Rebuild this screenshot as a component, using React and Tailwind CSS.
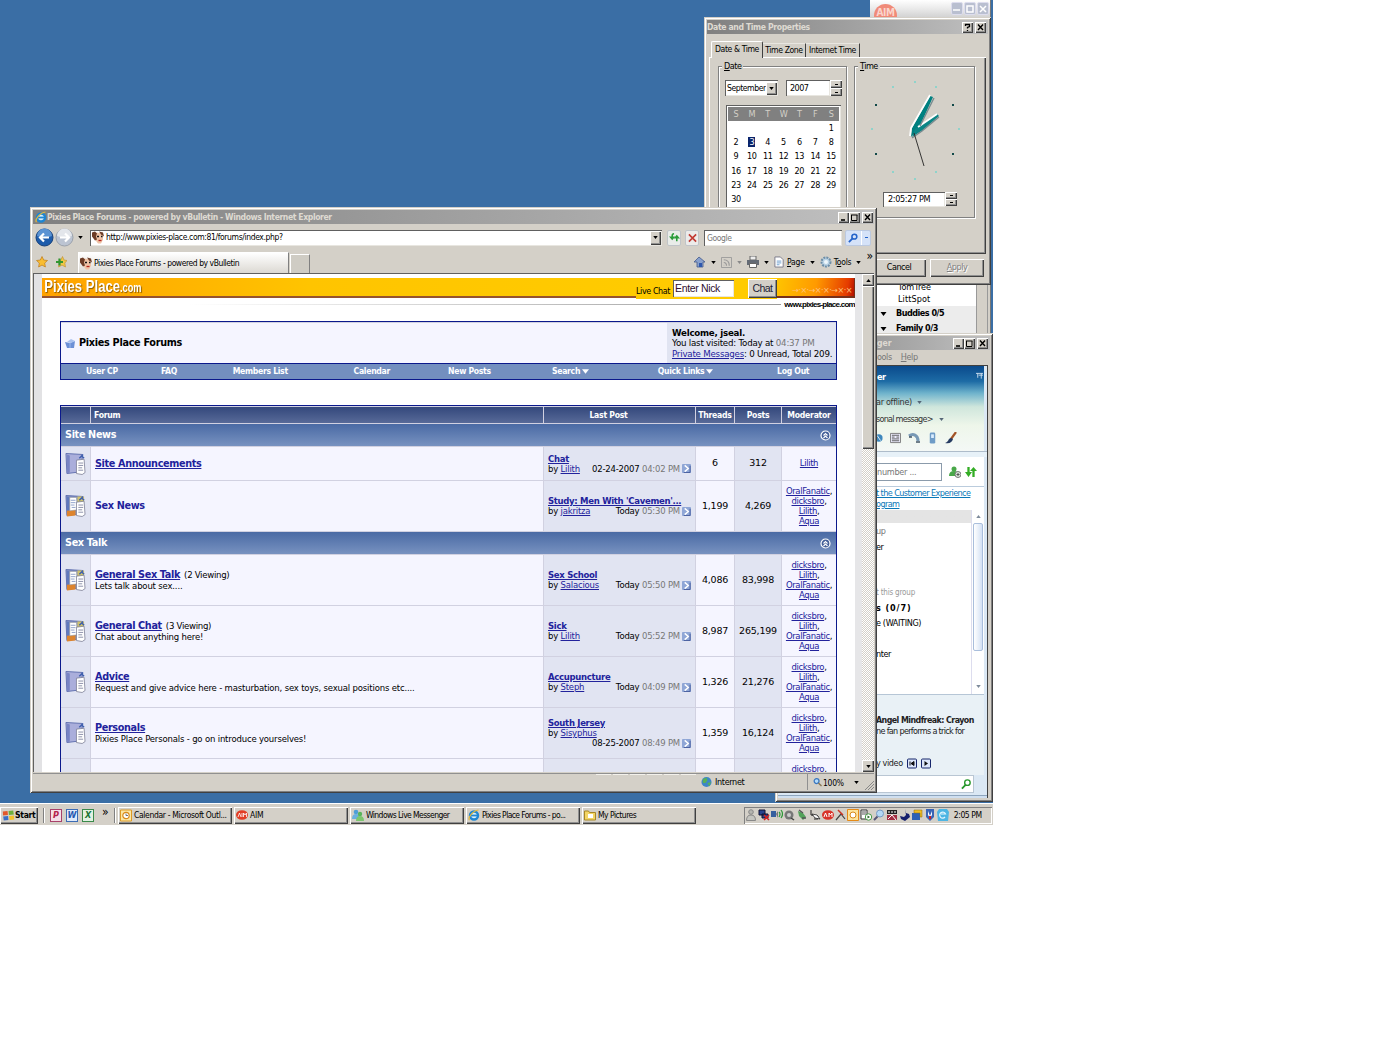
import { clsx } from 'clsx';

const RAISED = 'bg-[#d4d0c8] shadow-[inset_1px_1px_#fff,inset_-1px_-1px_#404040,inset_-2px_-2px_#909090]';
const SUNKEN = 'bg-white shadow-[inset_1px_1px_#606060,inset_-1px_-1px_#e8e6e0]';
const WINDOW = 'absolute bg-[#d4d0c8] shadow-[inset_1px_1px_#d4d0c8,inset_-1px_-1px_#404040,inset_2px_2px_#fff,inset_-2px_-2px_#808080]';

const Caret = ({ className }) => (
    <svg viewBox="0 0 6 4" className={clsx('w-[5px] h-[3px] shrink-0', className)}>
        <path d="M0 0h6L3 4z" fill="currentColor" />
    </svg>
);

const TitleButton = ({ kind }) => (
    <div className={clsx(RAISED, 'w-[11px] h-[11px]')}>
        <svg viewBox="0 0 11 11" className="w-[11px] h-[11px]" fill="none" stroke="#000">
            {kind === 'min' && <path d="M3 8h4" strokeWidth="1.6" />}
            {kind === 'max' && <path d="M2 3h6.5M2.5 3v5.5h5.5V3" />}
            {kind === 'close' && <path d="M3 2.5l5 5.5M8 2.5l-5 5.5" strokeWidth="1.4" />}
            {kind === 'help' && <path d="M3.5 4V2.5h4v2l-2 1v1M5.5 8v1" strokeWidth="1.3" />}
        </svg>
    </div>
);

const Spinner = ({ className }) => (
    <div className={clsx('flex flex-col', className)}>
        <div className={clsx(RAISED, 'flex-1 flex items-center justify-center')}><i className="w-[3px] h-px bg-black" /></div>
        <div className={clsx(RAISED, 'flex-1 flex items-center justify-center')}><i className="w-[3px] h-px bg-black" /></div>
    </div>
);

/* ---------- AIM buddy list ---------- */

const AimWindow = () => (
    <div className="absolute left-[870px] top-0 w-[121px] h-[336px] bg-[#d4d0c8] border-r border-[#777] flex flex-col">
        <div className="h-[18px] flex items-start bg-linear-to-b from-white via-[#e9e9e9] to-[#d0d0d0]">
            <div className="mt-[4px] ml-[4px] w-[23px] h-[14px] rounded-t-full bg-[#f08a78] text-[#fbd5cc] text-[10px] leading-[18px] font-bold text-center tracking-[-0.5px]">AIM</div>
            <div className="ml-auto mr-px mt-[2px] flex gap-px">
                {['min', 'max', 'close'].map((k) => (
                    <div key={k} className="w-[12px] h-[13px] rounded-[2px] bg-[#b9bfd0] border border-[#dde] flex items-center justify-center">
                        <svg viewBox="0 0 8 8" className="w-[8px] h-[8px]" fill="none" stroke="#fff" strokeWidth="1.5">
                            {k === 'min' && <path d="M0 5h7" />}
                            {k === 'max' && <path d="M1 1h6v6H1z" />}
                            {k === 'close' && <path d="M1 1l6 6M7 1L1 7" />}
                        </svg>
                    </div>
                ))}
            </div>
        </div>
        <div className="mt-[264px] flex-1 flex">
            <div className="w-[106px] bg-white text-[9px]">
                <div className="pl-[28px] h-[10px] leading-[10px]">TomTree</div>
                <div className="pl-[28px] h-[14px] leading-[15px] tracking-[0.1px]">LittSpot</div>
                <div className="bg-[#ececec] font-bold tracking-[-0.5px]">
                    <div className="pl-[10px] h-[15px] flex items-center"><Caret className="w-[7px] h-[4px] mr-[9px]" />Buddies 0/5</div>
                    <div className="pl-[10px] h-[15px] flex items-center"><Caret className="w-[7px] h-[4px] mr-[9px]" />Family 0/3</div>
                </div>
            </div>
            <div className="w-[12px] bg-[#d4d0c8] border-x border-[#999]" />
        </div>
    </div>
);

/* ---------- Date and Time ---------- */

const weeks = [
    ['', '', '', '', '', '', '1'],
    ['2', '3', '4', '5', '6', '7', '8'],
    ['9', '10', '11', '12', '13', '14', '15'],
    ['16', '17', '18', '19', '20', '21', '22'],
    ['23', '24', '25', '26', '27', '28', '29'],
    ['30', '', '', '', '', '', ''],
];

const tealTicks = [[59, 15], [80, 20], [103, 62], [80, 105], [59, 112], [37, 105], [16, 62], [37, 20]];
const darkTicks = [[97, 38], [97, 87], [20, 87], [20, 38]];

const Clock = () => (
    <svg viewBox="0 0 119 124" className="-mt-[7px] w-[119px] h-[124px]">
        {tealTicks.map(([x, y]) => <rect key={`${x}-${y}`} x={x} y={y} width="2" height="2" fill="#8fd3cb" />)}
        {darkTicks.map(([x, y]) => <rect key={`${x}-${y}`} x={x} y={y} width="2" height="2" fill="#104848" />)}
        <path d="M56 71l1-9 18-32 3 1-14 31z" fill="#008080" />
        <path d="M57 71l3-8 22-15 2 2-16 14z" fill="#0b8585" />
        <path d="M55 70l1-8L75 29M63 61l19-13" fill="none" stroke="#fff" strokeWidth="1.8" />
        <path d="M57 72l10-7 17-14M65 60l14-28" fill="none" stroke="#7a8c90" strokeWidth="1.4" />
        <path d="M59 67l10 33" stroke="#222" strokeWidth="0.9" />
    </svg>
);

const Group = ({ label, className, children }) => (
    <div className={clsx('border border-[#808080] shadow-[1px_1px_#fff,inset_1px_1px_#fff]', className)}>
        <div className="h-[12px] -mt-[6px] flex"><span className="ml-[3px] px-[2px] bg-[#d4d0c8] leading-[10px] h-[11px] tracking-[-0.5px]"><u>{label[0]}</u>{label.slice(1)}</span></div>
        {children}
    </div>
);

const DateTimeWindow = () => (
    <div className={clsx(WINDOW, 'left-[704px] top-[17px] w-[287px] h-[268px] p-[3px] text-[9px]')}>
        <div className="h-[14px] flex items-center gap-px pr-[2px] bg-linear-to-r from-[#808080] to-[#c0c0c0]">
            <span className="text-[#dedad2] font-bold text-[8.6px] tracking-[-0.37px]">Date and Time Properties</span>
            <div className="ml-auto flex gap-[2px]"><TitleButton kind="help" /><TitleButton kind="close" /></div>
        </div>
        <div className="h-[23px] pl-[4px] flex items-end text-[8.600px] tracking-[-0.4px]">
            <div className="w-[52px] h-[17px] relative top-px bg-[#d4d0c8] border-l border-t border-white border-r border-r-[#404040] rounded-t-[2px] text-center leading-[14px]">Date &amp; Time</div>
            <div className="w-[43px] h-[14px] border-t border-[#e8e6e0] border-r border-r-[#404040] text-center leading-[12px]">Time Zone</div>
            <div className="w-[54px] h-[14px] border-t border-[#e8e6e0] border-r border-r-[#404040] text-center leading-[12px]">Internet Time</div>
        </div>
        <div className="mx-[2px] h-[197px] border-l border-t border-white shadow-[inset_-1px_-1px_#404040,inset_-2px_-2px_#909090] flex gap-[7px] pl-[8px] pt-[8px]">
            <Group label="Date" className="w-[129px] h-[152px]">
                <div className="mt-[7px] ml-[6px] flex">
                    <div className={clsx(SUNKEN, 'w-[53px] h-[16px] flex items-center pl-[2px] pr-px text-[8.600px] tracking-[-0.45px]')}>
                        September
                        <div className={clsx(RAISED, 'ml-auto w-[11px] h-[13px] shrink-0 flex items-center justify-center')}><Caret className="w-[4px]" /></div>
                    </div>
                    <div className={clsx(SUNKEN, 'ml-[8px] w-[44px] h-[16px] leading-[16px] pl-[4px] tracking-[-0.55px]')}>2007</div>
                    <Spinner className="w-[12px] h-[16px]" />
                </div>
                <div className={clsx(SUNKEN, 'mt-[9px] ml-[7px] w-[115px] h-[103px] p-[2px] text-center tracking-[-0.4px]')}>
                    <div className="grid grid-cols-7 h-[14px] leading-[14px] bg-[#808080] text-[#d4d0c8]">
                        {['S', 'M', 'T', 'W', 'T', 'F', 'S'].map((d, i) => <span key={i}>{d}</span>)}
                    </div>
                    {weeks.map((week, i) => (
                        <div key={i} className="grid grid-cols-7 h-[14.2px] leading-[14px]">
                            {week.map((d, j) => (
                                <span key={j}>{d === '3' ? <b className="inline-block w-[7px] h-[10px] leading-[10px] bg-[#0a246a] text-white font-normal">3</b> : d}</span>
                            ))}
                        </div>
                    ))}
                </div>
            </Group>
            <Group label="Time" className="w-[121px] h-[152px]">
                <Clock />
                <div className="mt-[2px] ml-[28px] flex">
                    <div className={clsx(SUNKEN, 'w-[62px] h-[15px] leading-[15px] pl-[5px] tracking-[-0.35px]')}>2:05:27 PM</div>
                    <Spinner className="w-[12px] h-[14px]" />
                </div>
            </Group>
        </div>
        <div className="mt-[5px] mr-[4px] flex justify-end gap-[4px] tracking-[-0.5px]">
            <div className={clsx(RAISED, 'w-[54px] h-[18px] leading-[17px] text-center')}>Cancel</div>
            <div className={clsx(RAISED, 'w-[54px] h-[18px] leading-[17px] text-center text-[#808080] [text-shadow:1px_1px_#fff]')}><u>A</u>pply</div>
        </div>
    </div>
);

/* ---------- Windows Live Messenger ---------- */

const MessengerWindow = () => (
    <div className={clsx(WINDOW, 'left-[775px] top-[333px] w-[218px] h-[469px] p-[3px] text-[9px] tracking-[-0.4px] whitespace-nowrap overflow-hidden')}>
        <div className="h-[14px] pl-[99px] pr-[2px] flex items-center justify-between bg-linear-to-r from-[#808080] to-[#c0c0c0] text-[#dedad2] font-bold text-[8.6px] tracking-normal">
            ger
            <div className="flex"><TitleButton kind="min" /><TitleButton kind="max" /><div className="ml-[2px]"><TitleButton kind="close" /></div></div>
        </div>
        <div className="h-[15px] pl-[99px] flex items-center gap-[9px] text-[#777]"><span>ools</span><span><u>H</u>elp</span></div>
        <div className="h-[433px] mr-[2px] border-t border-r border-[#404040] bg-[#dbe8f4] flex flex-col">
            <div className="h-[85px] mr-[3px] bg-[linear-gradient(#0a4a8c,#1d6ba5_18%,#6fb3cc_32%,#cfe6dc_48%,#eef6ea_70%,#f4f8f6)] flex flex-col">
                <div className="h-[24px] pl-[99px] pr-[1px] flex items-center justify-between text-white font-bold">
                    er
                    <svg viewBox="0 0 8 8" className="w-[7px] h-[8px] mb-[4px]" fill="none" stroke="#d6e6f4"><path d="M0 1h8M2 1v5M6 1v6M3 3h5" /></svg>
                </div>
                <div className="h-[25px] pl-[98px] flex items-center gap-[5px] text-[#333] tracking-[-0.3px]">ar offline) <Caret className="text-[#567]" /></div>
                <div className="h-[9px] pl-[98px] flex items-center gap-[6px] text-[#333] tracking-[-0.75px]">sonal message&gt; <Caret className="text-[#567]" /></div>
                <div className="h-[27px] pl-[95px] flex items-center gap-[7px]">
                    <svg viewBox="0 0 12 12" className="w-[10px] h-[12px]"><circle cx="7" cy="6" r="4.5" fill="#3d87bd" /><path d="M5 3l4 6" stroke="#fff" /></svg>
                    <svg viewBox="0 0 12 12" className="w-[11px] h-[12px]"><path d="M.5 1h11v10H.5z" fill="#eef" stroke="#777" /><path d="M2 3h8M2 5h3m2 0h3M2 7h8M2 9h8" stroke="#555" /></svg>
                    <svg viewBox="0 0 12 12" className="w-[12px] h-[12px]"><path d="M1 4c4-3 9-1 9 5" fill="none" stroke="#7899b5" strokeWidth="3" /><path d="M1 5h3M8 10h4" stroke="#456" strokeWidth="1.5" /></svg>
                    <svg viewBox="0 0 12 12" className="w-[11px] h-[12px]"><rect x="3" y="0" width="6" height="12" rx="1.5" fill="#6f9cc7" /><path d="M4.500 2h3v4h-3z" fill="#d9ecff" /></svg>
                    <svg viewBox="0 0 12 12" className="w-[12px] h-[12px]"><path d="M11 0L6 7" stroke="#a35427" strokeWidth="2.2" /><path d="M6 6C3 6 4 10 0 11c5 1 7-1 8-4z" fill="#263b62" /></svg>
                </div>
            </div>
            <div className="h-[6px] border-t border-[#aebcca] bg-[#e7f1f8]" />
            <div className="mr-[3px] bg-white h-[30px] flex items-center border-b border-[#bcd]">
                <div className="w-[164px] h-[18px] border border-[#8b9bab] pl-[98px] leading-[16px] text-[#777] tracking-[-0.25px]">number ...</div>
                <svg viewBox="0 0 12 12" className="ml-[7px] w-[12px] h-[12px]"><circle cx="5" cy="3" r="2.500" fill="#49a849" /><path d="M0 10q0-5 5-5t4 5z" fill="#4aa74a" /><circle cx="9" cy="8.500" r="3" fill="#dde8dd" stroke="#777" /><path d="M7.500 8.500h3M9 7v3" stroke="#555" /></svg>
                <svg viewBox="0 0 12 12" className="ml-[4px] w-[12px] h-[12px]"><path d="M3.500 1v6M8.500 11V5" stroke="#34ad25" strokeWidth="2.300" /><path d="M0 6h7l-3.500 5zM5 5h7L8.500 1z" fill="#34ad25" /></svg>
            </div>
            <div className="mr-[3px] bg-white h-[23px] pl-[98px] pt-px leading-[11px] text-[#0a78b8] underline tracking-[-0.57px]">t the Customer Experience<br />ogram</div>
            <div className="mr-[3px] h-[185px] bg-white flex border-b border-[#b6c6d6]">
                <div className="flex-1 pl-[98px] bg-linear-to-b from-[#e4e4e4] from-[13px] to-white to-[13px]">
                    <div className="h-[15px]" />
                    <div className="h-[12px] leading-[12px] text-[#777]">up</div>
                    <div className="h-[20px] leading-[20px]">er</div>
                    <div className="mt-[28px] h-[15px] leading-[15px] text-[#999] text-[8px] tracking-[-0.2px]">t this group</div>
                    <div className="h-[15px] leading-[17px] font-bold tracking-[0.9px]">s (0/7)</div>
                    <div className="h-[15px] leading-[17px] tracking-[-0.35px]">e (WAITING)</div>
                    <div className="mt-[16px] h-[16px] leading-[17px]">nter</div>
                </div>
                <div className="w-[13px] border-l border-[#dde] flex flex-col items-center text-[#7d8a9a]">
                    <Caret className="rotate-180 mt-[5px]" />
                    <div className="mt-[5px] w-[10px] h-[128px] rounded-[2px] border border-[#a9bedc] bg-linear-to-r from-white to-[#d4e1f4]" />
                    <Caret className="mt-auto mb-[6px]" />
                </div>
            </div>
            <div className="h-[80px] bg-[#e9f1f6] mr-[3px] pl-[98px] text-[#222]">
                <div className="pt-[20px] leading-[11px] font-bold text-[8.800px] tracking-[-0.55px]">Angel Mindfreak: Crayon</div>
                <div className="leading-[10px] tracking-[-0.68px]">ne fan performs a trick for</div>
                <div className="mt-[21px] flex items-center gap-[4px]">y video
                    <svg viewBox="0 0 10 10" className="w-[10px] h-[11px]"><rect x=".5" y=".5" width="9" height="9" rx="1" fill="#dce6fa" stroke="#17266b" /><path d="M3 3v4M7 3v4L4 5z" fill="#111" stroke="#111" /></svg>
                    <svg viewBox="0 0 10 10" className="w-[10px] h-[11px]"><rect x=".5" y=".5" width="9" height="9" rx="1" fill="#dce6fa" stroke="#17266b" /><path d="M3.500 2.500v5L7 5z" fill="#111" /></svg>
                </div>
            </div>
            <div className="w-[196px] h-[18px] bg-white border border-[#b9c6d3] flex items-center justify-end pr-px">
                <svg viewBox="0 0 12 12" className="w-[11px] h-[12px]" fill="none" stroke="#27972b"><circle cx="7" cy="4.500" r="3" strokeWidth="1.500" /><path d="M5 7l-4 4" strokeWidth="2" /></svg>
            </div>
            <div className="flex-1 mt-[2px] border-t border-[#8ea5bd] bg-[#cfdff0]" />
        </div>
    </div>
);

/* ---------- Forum page ---------- */

const Link = ({ children, plain, className }) => <span className={clsx('text-[#22229c]', !plain && 'underline', className)}>{children}</span>;

const FolderIcon = ({ fresh }) => (
    <svg viewBox="0 0 22 24" className="w-[21px] h-[24px]">
        <path d="M1 1l17 1v18L2 22z" fill={fresh ? '#7f8fc4' : '#aaaedb'} stroke="#5f6fae" />
        <path d="M2 2l3 1v18l-3 1z" fill={fresh ? '#5f79bd' : '#7884c4'} />
        {fresh && <path d="M2 17l9-1v6l-9 1z" fill="#dd842d" />}
        {fresh && <path d="M5 3h7l1 13-8 1z" fill="#fff" stroke="#999" strokeWidth=".6" />}
        {fresh && <path d="M13 2h7v6h-7z" fill="#cfc26d" />}
        <path d="M12 8l8-1 1 14-3 2-6-1z" fill="#fff" stroke="#777a90" strokeWidth=".8" />
        <path d="M14 11h5M14 13.500h5M14 16h4M14 18.500h5" stroke="#8b8fa8" />
        {fresh && <path d="M6 6h5M6 8.500h5M6 11h4M7 13.500h4" stroke="#8ea0c8" />}
        <path d="M15 6l4-4M17 3l3 3" stroke="#3e5fae" strokeWidth="1.500" />
    </svg>
);

const GoIcon = () => (
    <svg viewBox="0 0 10 10" className="w-[9px] h-[9px] shrink-0 ml-[2px]">
        <rect width="10" height="10" rx="1" fill="#8fa6d6" />
        <path d="M3 1.500l4 3.500-4 3.500" fill="none" stroke="#fff" strokeWidth="1.600" /><path d="M9 2v7.500H2" fill="none" stroke="#42589a" />
    </svg>
);

const sections = [
    {
        name: 'Site News',
        forums: [
            { name: 'Site Announcements', last: 'Chat', by: 'Lilith', date: '02-24-2007', time: '04:02 PM', threads: '6', posts: '312', mods: ['Lilith'] },
            { name: 'Sex News', plain: true, fresh: true, last: "Study: Men With 'Cavemen'...", by: 'jakritza', date: 'Today', time: '05:30 PM', threads: '1,199', posts: '4,269', mods: ['OralFanatic', 'dicksbro', 'Lilith', 'Aqua'] },
        ],
    },
    {
        name: 'Sex Talk',
        forums: [
            { name: 'General Sex Talk', viewing: '(2 Viewing)', text: 'Lets talk about sex....', fresh: true, last: 'Sex School', by: 'Salacious', date: 'Today', time: '05:50 PM', threads: '4,086', posts: '83,998' },
            { name: 'General Chat', viewing: '(3 Viewing)', text: 'Chat about anything here!', fresh: true, last: 'Sick', by: 'Lilith', date: 'Today', time: '05:52 PM', threads: '8,987', posts: '265,199' },
            { name: 'Advice', text: 'Request and give advice here - masturbation, sex toys, sexual positions etc....', last: 'Accupuncture', by: 'Steph', date: 'Today', time: '04:09 PM', threads: '1,326', posts: '21,276' },
            { name: 'Personals', text: 'Pixies Place Personals - go on introduce yourselves!', last: 'South Jersey', by: 'Sisyphus', date: '08-25-2007', time: '08:49 PM', wrap: true, threads: '1,359', posts: '16,124' },
        ],
    },
];
const defaultMods = ['dicksbro', 'Lilith', 'OralFanatic', 'Aqua'];

const COLS = 'grid grid-cols-[29px_452px_151px_38px_46px_54px] gap-x-px';

const ForumRow = ({ forum }) => {
    const mods = forum.mods || defaultMods;
    return (
        <div className={clsx(COLS, 'mt-px', mods.length === 1 ? 'h-[33px]' : 'h-[50px]')}>
            <div className="bg-[#e1e4f2] flex items-center justify-center"><FolderIcon fresh={forum.fresh} /></div>
            <div className="bg-[#f5f5ff] flex flex-col justify-center pl-[4px]">
                <div className="leading-[12px] text-[8.600px]">
                    <Link plain={forum.plain} className="font-bold text-[9.700px] tracking-[-0.36px]">{forum.name}</Link>
                    {forum.viewing && <span className="ml-[4px] tracking-[-0.3px]">{forum.viewing}</span>}
                </div>
                {forum.text && <div className="leading-[10px] text-[8.500px] tracking-[-0.17px]">{forum.text}</div>}
            </div>
            <div className="bg-[#e1e4f2] flex flex-col justify-center px-[4px] leading-[10px] text-[8.500px] tracking-[-0.2px]">
                {forum.last && <Link className="font-bold tracking-[-0.3px]">{forum.last}</Link>}
                {forum.by && (
                    <div className={clsx('flex', forum.wrap && 'flex-wrap')}>
                        <span className={clsx(forum.wrap && 'w-full')}>by <Link>{forum.by}</Link></span>
                        <span className="ml-auto flex items-center">{forum.date}&nbsp;<span className="text-[#777]">{forum.time}</span><GoIcon /></span>
                    </div>
                )}
            </div>
            <div className="bg-[#f5f5ff] flex items-center justify-center text-[9.500px] tracking-[-0.2px]">{forum.threads}</div>
            <div className="bg-[#e1e4f2] flex items-center justify-center text-[9.500px] tracking-[-0.2px]">{forum.posts}</div>
            <div className="bg-[#f5f5ff] flex flex-col items-center justify-center leading-[10.200px] text-[8.500px] tracking-[-0.38px]">
                {mods.map((m, i) => <span key={m}><Link>{m}</Link>{i < mods.length - 1 && ','}</span>)}
            </div>
        </div>
    );
};

const navItems = [
    ['User CP', 'w-[82px]'], ['FAQ', 'w-[53px]'], ['Members List', 'w-[130px]'], ['Calendar', 'w-[94px]'],
    ['New Posts', 'w-[102px]'], ['Search', 'w-[101px]', true], ['Quick Links', 'w-[130px]', true], ['Log Out', 'w-[86px]'],
];

const columns = [
    ['', ''], ['Forum', 'text-left pl-[3px]'], ['Last Post', 'pr-[22px]'], ['Threads', ''], ['Posts', ''], ['Moderator', ''],
];

const ForumPage = () => (
    <div className="w-[813px] bg-white font-['DejaVu_Sans',sans-serif] text-black overflow-hidden">
        <div className="h-[22px] mt-[4px] flex items-start">
            <div className="w-[594px] h-[20px] bg-[linear-gradient(90deg,#ffa200,#ffc400_45%,#ffcb00)] border-b-2 border-[#97532d] text-white font-bold font-['Liberation_Sans',sans-serif] [text-shadow:1px_1px_1px_#8a5a00]">
                <div className="flex items-baseline origin-left scale-x-[0.77] pl-[3px]">
                    <span className="text-[17px] leading-[18px]">Pixies Place</span>
                    <span className="text-[12px] leading-[18px]">.com</span>
                </div>
            </div>
            <div className="w-[141px] h-[21px] bg-[#ffcb00] flex items-center font-['Liberation_Sans',sans-serif]">
                <span className="w-[37px] pt-[6px] text-[8px] font-['DejaVu_Sans',sans-serif] tracking-[-0.4px]">Live Chat</span>
                <div className={clsx(SUNKEN, 'w-[61px] h-[17px] leading-[17px] pl-[2px] text-[10.500px] tracking-[-0.35px] text-[#301030]')}>Enter Nick</div>
                <div className={clsx(RAISED, 'ml-[14px] w-[29px] h-[19px] leading-[18px] text-center text-[10.500px] tracking-[-0.6px] text-[#223]')}>Chat</div>
            </div>
            <div className="flex-1 h-[20px] bg-[linear-gradient(100deg,#ffc400,#ff9a00_50%,#e53b00_90%,#b01000)] border-b-2 border-r border-[#77301a] text-[#ffc27c] text-[8px] leading-[26px] text-right pr-[2px] tracking-[-0.5px]">→·×·→×·×·→×·×</div>
        </div>
        <div className="h-[9px] flex items-center">
            <div className="w-[739px] h-px bg-linear-to-r from-white from-20% to-[#999]" />
            <span className="ml-auto font-['Liberation_Sans',sans-serif] font-bold text-[8px] leading-[9px] tracking-[-0.72px]">www.pixies-place.com</span>
        </div>
        <div className="mt-[12px] mx-[18px] w-[777px] border border-[#0b198c] bg-[#0b198c]">
            <div className="h-[41px] flex bg-[#f5f5ff] border-t border-[#d1d1e1]">
                <div className="w-[606px] flex items-center pl-[4px]">
                    <svg viewBox="0 0 11 11" className="w-[11px] h-[11px]"><path d="M0 4l5 1 5-2-1 7H2z" fill="#6c90d6" /><path d="M2 4l4-3 4 2-4 2z" fill="#a9c1ee" /><path d="M5 5v5" stroke="#9bb8ec" /></svg>
                    <b className="ml-[3px] text-[9.700px] tracking-[-0.3px]">Pixies Place Forums</b>
                </div>
                <div className="flex-1 bg-[#e1e4f2] pl-[5px] pt-[5px] leading-[10.300px] text-[8.700px] tracking-[-0.23px]">
                    <b className="tracking-[-0.25px]">Welcome, jseal.</b>
                    <div>You last visited: Today at <span className="text-[#777]">04:37 PM</span></div>
                    <div><Link>Private Messages</Link>: 0 Unread, Total 209.</div>
                </div>
            </div>
            <div className="mt-px h-[15px] flex bg-[#738fbf] text-white font-bold font-['DejaVu_Sans_Condensed',sans-serif] text-[8.600px] tracking-[-0.3px]">
                {navItems.map(([label, width, menu]) => (
                    <div key={label} className={clsx(width, 'flex items-center justify-center gap-[2px]')}>{label}{menu && <Caret className="w-[7px] h-[5px]" />}</div>
                ))}
            </div>
        </div>
        <div className="mt-[25px] mx-[18px] w-[777px] border border-[#0b198c] bg-[#d1d1e1]">
            <div className={clsx(COLS, 'mt-px h-[16px] text-white font-bold font-["DejaVu_Sans_Condensed",sans-serif] text-[8.600px] leading-[17px] text-center tracking-[-0.25px]')}>
                {columns.map(([label, className]) => (
                    <div key={label} className={clsx('bg-linear-to-b from-[#34487c] to-[#586a98] h-[16px]', className)}>{label}</div>
                ))}
            </div>
            {sections.map((s) => (
                <div key={s.name}>
                    <div className="mt-px h-[22px] flex items-center justify-between px-[5px] pl-[4px] bg-linear-to-b from-[#4a6aa4] to-[#7892c0] text-white font-bold text-[9.700px] tracking-[-0.35px]">
                        {s.name}
                        <svg viewBox="0 0 11 11" className="w-[11px] h-[11px]" fill="none" stroke="#fff" strokeWidth="1.2"><circle cx="5.500" cy="5.500" r="4.500" fill="#445f98" /><path d="M3.500 5.500l2-2 2 2M3.500 8l2-2 2 2" /></svg>
                    </div>
                    {s.forums.map((f) => <ForumRow key={f.name} forum={f} />)}
                </div>
            ))}
            <ForumRow forum={{}} />
        </div>
    </div>
);

/* ---------- Internet Explorer ---------- */

const IeIcon = () => (
    <svg viewBox="0 0 12 12" className="w-[12px] h-[12px] shrink-0">
        <circle cx="6" cy="6.500" r="4" fill="#d8effc" stroke="#1f86d2" strokeWidth="2.400" /><path d="M3 6.500h7.500" stroke="#1f86d2" strokeWidth="1.800" />
        <path d="M1.500 11C-.5 9 5 1.500 10.500 1" fill="none" stroke="#e3b93c" strokeWidth="1.200" />
    </svg>
);

const PixieIcon = () => (
    <svg viewBox="0 0 12 12" className="w-[12px] h-[13px] shrink-0">
        <path d="M2 2l3-1 5 1 1 3v3l-2 4H6L3 8z" fill="#efc3a6" /><path d="M0 1l3-1 2 2-1 3 1 3-2 1-3-4zM7 0l4 1 1 4-3-2z" fill="#6d3c26" />
        <path d="M5 5h2M9 5h1.500" stroke="#111" strokeWidth="1.700" /><path d="M6.500 9h3" stroke="#b3261f" strokeWidth="1.300" />
    </svg>
);

const RoundArrow = ({ active }) => (
    <svg viewBox="0 0 19 19" className="w-[19px] h-[19px]">
        <circle cx="9.500" cy="9.500" r="8.500" fill={active ? '#1e5cab' : '#bcc4d2'} stroke={active ? '#153e78' : '#9ba1ac'} />
        <path d="M2 8a7.500 7.500 0 0115 0q-7 3-15 0z" fill={active ? '#5b93d3' : '#e3e6eb'} />
        <path d={active ? 'M14 9.500H5.500M9 5.500l-4 4 4 4' : 'M5 9.500h8.500M10 5.500l4 4-4 4'} fill="none" stroke="#fff" strokeWidth="2.200" />
    </svg>
);

const IeWindow = () => (
    <div className={clsx(WINDOW, 'left-[30px] top-[207px] w-[847px] h-[586px] p-[3px] flex flex-col text-[8.500px] whitespace-nowrap')}>
        <div className="h-[14px] shrink-0 flex items-center pl-[2px] pr-px bg-linear-to-r from-[#808080] to-[#c0c0c0]">
            <IeIcon />
            <span className="text-[#dedad2] font-bold text-[8.600px] tracking-[-0.41px]">Pixies Place Forums - powered by vBulletin - Windows Internet Explorer</span>
            <div className="ml-auto flex"><TitleButton kind="min" /><TitleButton kind="max" /><div className="ml-[2px]"><TitleButton kind="close" /></div></div>
        </div>
        <div className="h-[27px] shrink-0 flex items-center pl-[2px]">
            <RoundArrow active />
            <div className="ml-px"><RoundArrow /></div>
            <Caret className="ml-[4px]" />
            <div className={clsx(SUNKEN, 'ml-[7px] w-[572px] h-[16px] flex items-center gap-[2px] pl-[2px] pr-px tracking-[-0.37px]')}>
                <PixieIcon />http://www.pixies-place.com:81/forums/index.php?
                <div className={clsx(RAISED, 'ml-auto w-[11px] h-[14px] flex items-center justify-center')}><Caret className="w-[4px]" /></div>
            </div>
            <div className="ml-[5px] w-[14px] h-[16px] bg-[#e9ece9] border border-[#c0c4c8] rounded-[2px] flex items-center justify-center">
                <svg viewBox="0 0 12 12" className="w-[11px] h-[11px]"><path d="M5.500 2Q3.500 2 3.500 4v2M8.500 10V6" fill="none" stroke="#2a9c3a" strokeWidth="1.700" /><path d="M0 5h7L3.500 9zM5 7h7L8.500 3z" fill="#2a9c3a" /></svg>
            </div>
            <div className="ml-[4px] w-[14px] h-[16px] bg-[#ecebea] border border-[#c0c4c8] rounded-[2px] flex items-center justify-center">
                <svg viewBox="0 0 10 10" className="w-[9px] h-[10px]" stroke="#c23a34" strokeWidth="1.800"><path d="M1 1l8 8M9 1L1 9" /></svg>
            </div>
            <div className={clsx(SUNKEN, 'ml-[5px] w-[138px] h-[16px] leading-[17px] pl-[3px] text-[#777] tracking-[-0.4px]')}>Google</div>
            <div className="ml-[3px] w-[26px] h-[16px] bg-[#d5e2f8] border border-[#bcc9df] rounded-[2px] flex items-center justify-around">
                <svg viewBox="0 0 11 11" className="w-[10px] h-[10px]" fill="none" stroke="#2463c9"><circle cx="7" cy="4" r="2.700" strokeWidth="1.700" /><path d="M5 6l-4 4" strokeWidth="2" /></svg>
                <i className="w-px h-full bg-white" /><i className="w-[3px] h-px bg-[#2463c9]" />
            </div>
        </div>
        <div className="h-[22px] shrink-0 flex items-center pl-[3px]">
            <svg viewBox="0 0 12 12" className="w-[12px] h-[12px]"><path d="M6 .5l1.700 3.500 3.800.5-2.800 2.600.7 3.900L6 9.100 2.600 11l.7-3.900L.5 4.500 4.300 4z" fill="#f9bd31" stroke="#bf7b18" strokeWidth=".7" /></svg>
            <svg viewBox="0 0 12 12" className="ml-[7px] w-[12px] h-[12px]"><path d="M7.500 .5l1.500 3.500 3 .5-2.200 2.600.7 3.900L7 9.100 3.600 11l.7-3.900z" fill="#f0c846" stroke="#bf8b28" strokeWidth=".6" /><path d="M4.500 2.500v7M1 6h7" stroke="#329631" strokeWidth="2.200" /></svg>
            <div className="ml-[11px] self-end w-[211px] h-[21px] border border-white border-r-[#808080] border-b-0 bg-linear-to-b from-white to-[#dcd9d3] flex items-center gap-[2px] pl-px tracking-[-0.44px]"><PixieIcon />Pixies Place Forums - powered by vBulletin</div>
            <div className="ml-px self-end w-[20px] h-[19px] border border-white border-r-[#808080] border-b-0 bg-[#cfccc4]" />
            <div className="ml-auto flex items-center gap-[5px] pr-px">
                <svg viewBox="0 0 12 12" className="w-[12px] h-[12px]"><path d="M0 6l5-5 6 5H9v5H3V6z" fill="#88a0cc" stroke="#42598c" strokeWidth=".8" /><path d="M5 7h3v4H5z" fill="#2f58ad" /></svg>
                <Caret className="w-[4px]" />
                <svg viewBox="0 0 12 12" className="w-[11px] h-[11px]" fill="none" stroke="#999"><path d="M.5.500h11v11H.5z" /><path d="M3 9h.5M3 6q3 0 3 3.500M3 3q6 0 6 6.500" strokeWidth="1.300" /></svg>
                <Caret className="w-[4px] text-[#888]" />
                <svg viewBox="0 0 12 12" className="w-[12px] h-[12px]"><path d="M3 0h6v4H3z" fill="#eee" stroke="#666" /><path d="M0 4h12v5H0z" fill="#646b75" /><path d="M2.500 7.500h7v4h-7z" fill="#fff" stroke="#666" /></svg>
                <Caret className="w-[4px]" />
                <svg viewBox="0 0 12 12" className="w-[11px] h-[12px]"><path d="M1 .5h6l3 3v8H1z" fill="#fff" stroke="#778" /><path d="M3 5h5M3 7h5M3 9h3" stroke="#69c" /></svg>
                <span className="-ml-[3px] tracking-[-0.2px]"><u>P</u>age</span>
                <Caret className="w-[4px]" />
                <svg viewBox="0 0 12 12" className="w-[12px] h-[12px]"><circle cx="6" cy="6" r="4.500" fill="#b9d2e4" stroke="#6d8ea8" strokeWidth="2" strokeDasharray="2 1" /><circle cx="6" cy="6" r="2" fill="#eef6fb" /></svg>
                <span className="-ml-[3px] tracking-[-0.2px]">T<u>o</u>ols</span>
                <Caret className="w-[4px]" />
                <span className="text-[12px] leading-[8px] -mt-[12px]">»</span>
            </div>
        </div>
        <div className="h-[499px] shrink-0 flex border-l border-t border-[#606060] overflow-hidden">
            <div className="w-[8px] bg-[#e2e2e4]" />
            <ForumPage />
            <div className="w-[7px] bg-[#e6e6e8]" />
            <div className="w-[12px] flex flex-col justify-between bg-[repeating-conic-gradient(#d4d0c8_0_25%,#fff_0_50%)] bg-[length:2px_2px]">
                <div>
                    <div className={clsx(RAISED, 'h-[12px] flex items-center justify-center')}><Caret className="rotate-180" /></div>
                    <div className={clsx(RAISED, 'h-[163px]')} />
                </div>
                <div className={clsx(RAISED, 'h-[12px] flex items-center justify-center')}><Caret /></div>
            </div>
        </div>
        <div className="flex-1 mt-px flex items-center border-t border-[#909090]">
            <div className="ml-[563px] flex gap-[2px] self-start">{[0, 1, 2, 3, 4, 5].map((i) => <i key={i} className="w-[15px] h-px bg-[#f3f1ec]" />)}</div>
            <svg viewBox="0 0 12 12" className="ml-[5px] w-[11px] h-[12px]"><circle cx="6" cy="6" r="5.500" fill="#3c86c9" /><path d="M2 3l4-2 1 3-2 3-3 0zM7 7l4-1-2 5z" fill="#58b158" /></svg>
            <span className="ml-[3px] mt-[2px] text-[9px] tracking-[-0.35px]">Internet</span>
            <div className="ml-auto h-full border-l border-[#909090] flex items-center">
                <svg viewBox="0 0 10 10" className="ml-[5px] w-[9px] h-[10px]" fill="none" stroke="#3976c0"><circle cx="4" cy="4" r="2.700" fill="#b5dcfa" strokeWidth="1.400" /><path d="M6 6l3.500 3.500" stroke="#875" strokeWidth="1.600" /></svg>
                <span className="w-[31px] ml-px mt-[2px] tracking-[-0.3px]">100%</span>
                <Caret className="w-[4px] mr-[5px]" />
                <svg viewBox="0 0 10 10" className="w-[10px] h-[10px] self-end" stroke="#888"><path d="M1 10l9-9M4 10l6-6M7 10l3-3" /></svg>
            </div>
        </div>
    </div>
);

/* ---------- Taskbar ---------- */

const OfficeIcon = ({ letter, className }) => (
    <div className={clsx('w-[12px] h-[13px] border text-[9px] leading-[11px] font-bold italic text-center', className)}>{letter}</div>
);

const OutlookIcon = () => (
    <svg viewBox="0 0 12 12" className="w-[12px] h-[13px] shrink-0"><path d="M.5.500h11v11H.5z" fill="#fce7a3" stroke="#dd9a24" /><circle cx="6" cy="6" r="3.200" fill="#fff" stroke="#d98a1b" strokeWidth="1.200" /><path d="M6 4v2h2" fill="none" stroke="#555" strokeWidth=".8" /></svg>
);

const AimIcon = () => (
    <svg viewBox="0 0 12 12" className="w-[12px] h-[12px] shrink-0"><ellipse cx="6" cy="6" rx="6" ry="4.800" fill="#e23d25" /><path d="M2 8l1.500-4L5 8M6 4v4M7.500 8V4L9 6l1.500-2v4" fill="none" stroke="#fff" strokeWidth=".8" /></svg>
);

const BuddyIcon = () => (
    <svg viewBox="0 0 12 12" className="w-[12px] h-[12px] shrink-0"><circle cx="4" cy="3" r="2.300" fill="#4e9ed8" /><path d="M0 10q0-5 4-5t4 5z" fill="#6ab0e0" /><circle cx="8" cy="5" r="2.200" fill="#58b55a" /><path d="M4 12q0-5 4-5t4 5z" fill="#7cc66f" /></svg>
);

const FolderSmall = () => (
    <svg viewBox="0 0 12 12" className="w-[12px] h-[12px] shrink-0"><path d="M.5 2h4l1 1.500h6V11H.5z" fill="#f3d565" stroke="#a88726" /><path d="M4 5h5v4H4z" fill="#fff" /></svg>
);

const tasks = [
    ['Calendar - Microsoft Outl...', <OutlookIcon />, 'tracking-[-0.35px]'],
    ['AIM', <AimIcon />, 'tracking-[-0.2px]'],
    ['Windows Live Messenger', <BuddyIcon />, 'tracking-[-0.58px]'],
    ['Pixies Place Forums - po...', <IeIcon />, 'tracking-[-0.6px]'],
    ['My Pictures', <FolderSmall />, 'tracking-[-0.5px]'],
];

const tray = [
    <g><circle cx="6" cy="3" r="2.300" fill="#b5b5b0" stroke="#888" /><path d="M1.500 11.500q0-5.500 4.500-5.500t4.500 5.500z" fill="#c4c4bf" stroke="#888" /></g>,
    <g><path d="M1 1h6v5H1zM4 5h6v4H4z" fill="#27448f" stroke="#113" /><path d="M6 6l5 5M11 6l-5 5" stroke="#d32222" strokeWidth="1.600" /></g>,
    <g><path d="M0 2h5v6H0z" fill="#365f9f" /><path d="M5 5l2-3v7z" fill="#777" /><path d="M8 3q2 2 0 5M10 1q3 4 0 8" fill="none" stroke="#2b9936" strokeWidth="1.200" /></g>,
    <g><circle cx="6" cy="6" r="4.500" fill="#777" /><circle cx="6" cy="6" r="2" fill="#ccc" /><path d="M8 9l3 2" stroke="#444" strokeWidth="1.500" /></g>,
    <g><path d="M2 2l5 2 3 4-3 3-4-4z" fill="#53a35a" /><path d="M3 1l4 3M6 9h4" stroke="#555" strokeWidth="1.400" /></g>,
    <g><path d="M2 1v5l7 1v3H5" fill="none" stroke="#222" /><path d="M3 5l5 1 3 4-5-1z" fill="#fff" stroke="#222" strokeWidth=".8" /></g>,
    <g><ellipse cx="6" cy="6" rx="6" ry="4.800" fill="#d83228" /><path d="M2 8l1.500-4L5 8M7 8V4l1.500 2L10 4v4" fill="none" stroke="#fff" /></g>,
    <g><path d="M1 11l5-6 4 5" fill="none" stroke="#444" strokeWidth="1.200" /><path d="M3 1l5 5" stroke="#c32" strokeWidth="1.500" /></g>,
    <g><path d="M.5.500h11v11H.5z" fill="#fce39b" stroke="#e58a17" /><circle cx="6" cy="6" r="3" fill="#fff" stroke="#d98a1b" /></g>,
    <g><path d="M1 1h6v9H1z" fill="#fff" stroke="#333" /><path d="M2 3h4M2 5h4" stroke="#555" /><circle cx="8.500" cy="8" r="3.200" fill="#fff" stroke="#494" /><path d="M7.500 6.500v3L10 8z" fill="#262" /></g>,
    <g><circle cx="7" cy="4.500" r="3.500" fill="#b4d8f5" stroke="#779bc5" /><path d="M4.500 7.500L1 11" stroke="#557" strokeWidth="2" /></g>,
    <g><path d="M1 1h10v4H1z" fill="#222" /><path d="M3 2v2M6 2v2M9 2v2" stroke="#fff" /><path d="M1 6h10v5H1z" fill="#a32d41" /><path d="M2 10l4-4 4 5" fill="none" stroke="#fff" /></g>,
    <g><path d="M6 0l1 4 3 1 1 3-5 4-4-2-1-3 4 1 2-2z" fill="#16206d" /></g>,
    <g><path d="M1 4h8v7H1z" fill="#2b61b6" /><path d="M3 1h8v7H9V4H3z" fill="#edbd24" stroke="#8a6a10" strokeWidth=".5" /></g>,
    <g><path d="M2 0h8v8l-4 4-4-4z" fill="#3964b5" /><path d="M4 2l2 5 2-5v4l-2 3-2-3z" fill="#fff" /><path d="M5 7h2v3H5z" fill="#c22" /></g>,
    <g><path d="M2 0h8l2 3-1 9H1L0 3z" fill="#4db5e3" /><path d="M8 8a3 3 0 11.500-3H4" fill="none" stroke="#e6f7ff" strokeWidth="1.200" /></g>,
];

const Taskbar = () => (
    <div className="absolute left-0 top-[803px] w-[993px] h-[22px] bg-[#d4d0c8] border-t border-white flex items-center pt-px text-[8.500px] whitespace-nowrap">
        <div className={clsx(RAISED, 'w-[38px] h-[17px] flex items-center pl-[3px] gap-px font-bold text-[8.600px] tracking-[-0.3px]')}>
            <svg viewBox="0 0 11 11" className="w-[11px] h-[11px] -rotate-6"><path d="M0 1h5v4H0z" fill="#e2572a" /><path d="M6 1h5v4H6z" fill="#6cae3a" /><path d="M0 6h5v4H0z" fill="#3b6fc6" /><path d="M6 6h5v4H6z" fill="#f2c12e" /></svg>
            Start
        </div>
        <div className="ml-[5px] w-[2px] h-[15px] border-l border-[#808080] border-r border-r-white" />
        <div className="ml-[5px] flex gap-[4px]">
            <OfficeIcon letter="P" className="bg-[#f4dfe8] text-[#b5214c] border-[#a8416a]" />
            <OfficeIcon letter="W" className="bg-[#dfeafa] text-[#2457b0] border-[#3c6cb5]" />
            <OfficeIcon letter="X" className="bg-[#e2f1e2] text-[#207535] border-[#3a8a4a]" />
        </div>
        <span className="ml-[8px] w-[12px] text-[12px] leading-[8px] -mt-[6px]">»</span>
        <div className="w-[2px] h-[15px] border-l border-[#808080] border-r border-r-white" />
        <div className="ml-[2px] flex gap-[2px]">
            {tasks.map(([label, icon, tracking]) => (
                <div key={label} className={clsx(RAISED, 'w-[114px] h-[17px] flex items-center gap-[2px] pl-[2px]', tracking)}>
                    {icon}{label}
                </div>
            ))}
        </div>
        <div className="ml-auto mr-px w-[248px] h-[17px] shadow-[inset_1px_1px_#808080,inset_-1px_-1px_#fff] flex items-center pl-px">
            {tray.map((icon, i) => <svg key={i} viewBox="0 0 12 12" className="w-[12px] h-[12px] mr-[0.800px]">{icon}</svg>)}
            <span className="ml-[4px] tracking-[-0.400px]">2:05 PM</span>
        </div>
    </div>
);

export default function App() {
    return (
        <div className="w-[1400px] h-[1050px] bg-white overflow-hidden">
            <div className="relative w-[993px] h-[825px] bg-[#3a6ea5] overflow-hidden font-['DejaVu_Sans_Condensed',sans-serif] text-black">
                <AimWindow />
                <DateTimeWindow />
                <MessengerWindow />
                <IeWindow />
                <Taskbar />
            </div>
        </div>
    );
}
